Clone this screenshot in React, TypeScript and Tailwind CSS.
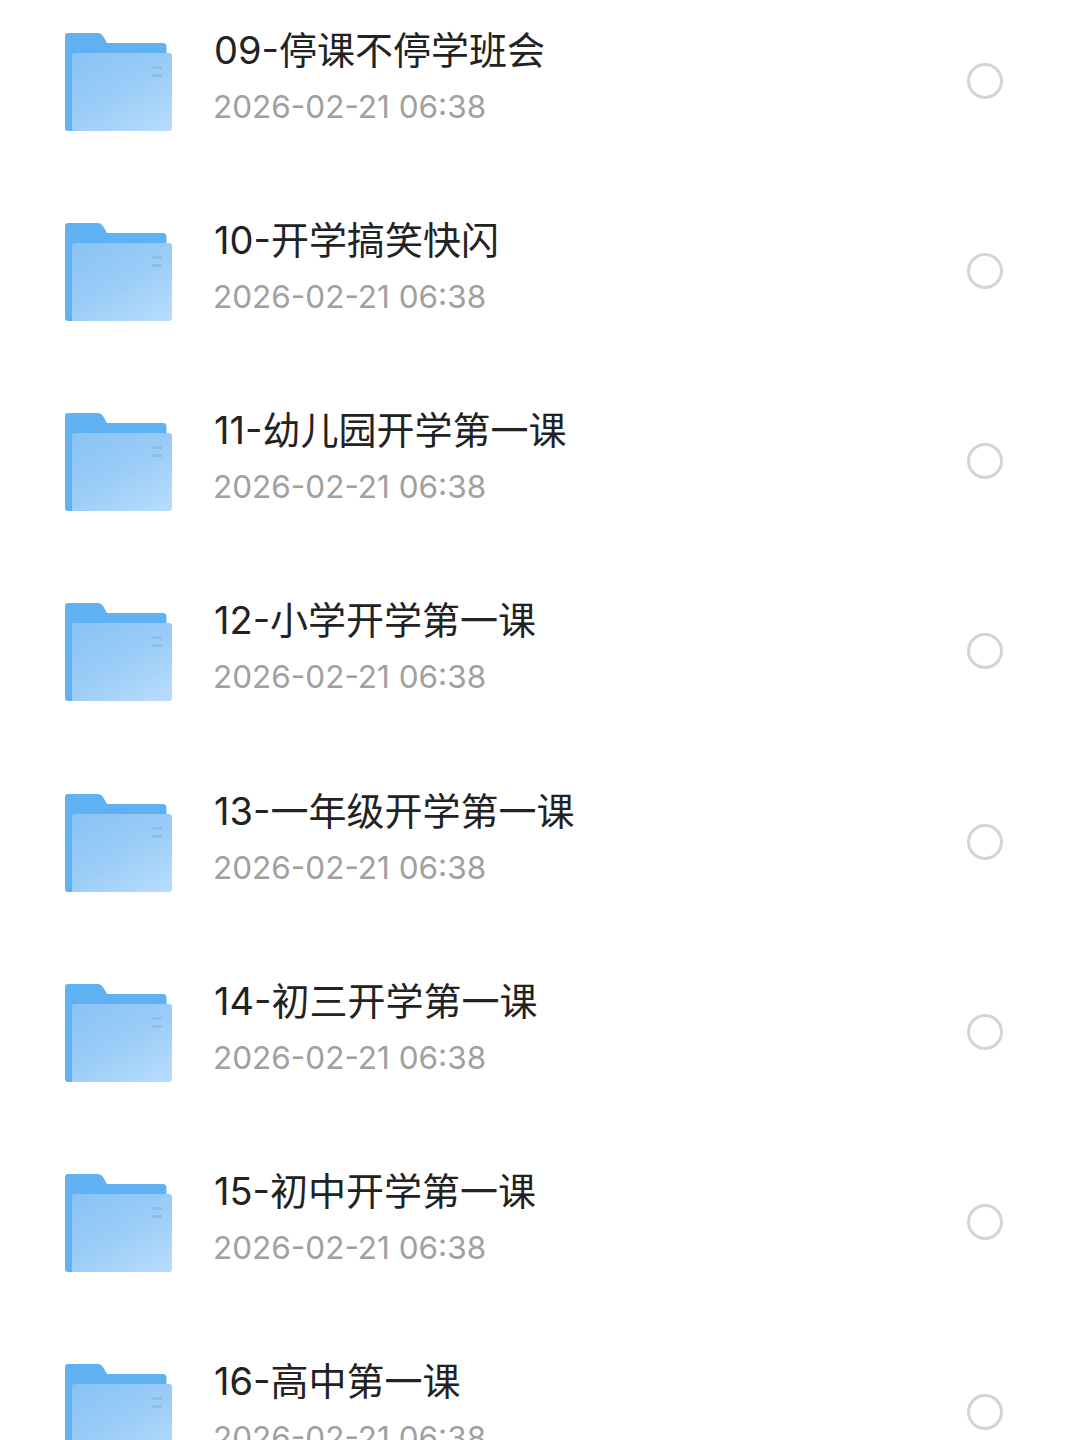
import React from "react";

const rows = [
  "09-停课不停学班会",
  "10-开学搞笑快闪",
  "11-幼儿园开学第一课",
  "12-小学开学第一课",
  "13-一年级开学第一课",
  "14-初三开学第一课",
  "15-初中开学第一课",
  "16-高中第一课",
];

function Folder({ id }: { id: number }) {
  return (
    <svg width="108" height="99" viewBox="0 0 108 99" className="mt-[4px] block shrink-0">
      <defs>
        <linearGradient id={`f${id}`} x1="0.1" y1="0" x2="0.85" y2="1">
          <stop offset="0" stopColor="#8ac4f5" />
          <stop offset="0.5" stopColor="#9accf7" />
          <stop offset="1" stopColor="#b6dbfc" />
        </linearGradient>
      </defs>
      <path
        d="M3 0H33Q36 0 38 3L42 10H98Q101.500 10 101.500 14V30H8V98H3Q0 98 0 95V3Q0 0 3 0Z"
        fill="#5fb1f2"
      />
      <path d="M7 98V23Q7 20 10 20H104Q107 20 107 23V95Q107 98 104 98Z" fill={`url(#f${id})`} />
      <rect x="87" y="33" width="10" height="3" fill="#8fbfe9" />
      <rect x="87" y="41" width="10" height="3" fill="#8fbfe9" />
    </svg>
  );
}

export default function App() {
  return (
    <div className="h-[1440px] w-[1080px] overflow-hidden bg-white font-['Inter','Noto_Sans_CJK_SC',sans-serif]">
      <div className="-mt-[15px] flex flex-col">
        {rows.map((title, i) => (
          <div key={title} className="flex h-[190.25px] shrink-0 items-center pl-[65px] pr-[77px]">
            <Folder id={i} />
            <div className="mb-[4px] ml-[40px] flex min-w-0 flex-1 flex-col">
              <div className="pl-[1px] text-[38px] leading-[50px] text-[#222222]">{title}</div>
              <div className="mt-[7px] text-[31.5px] leading-[50px] text-[#a0a0a0]">2026-02-21 06:38</div>
            </div>
            <div className="mt-[1px] h-[36px] w-[36px] shrink-0 rounded-full border-[3px] border-[#d4d4d4]" />
          </div>
        ))}
      </div>
    </div>
  );
}
